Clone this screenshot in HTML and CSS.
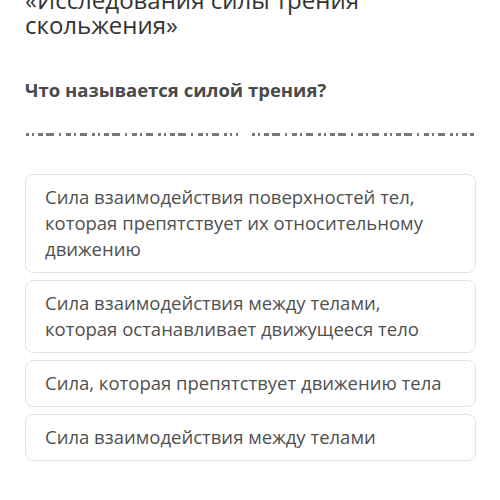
FILE: index.html
```html
<!DOCTYPE html>
<html lang="ru">
<head>
<meta charset="utf-8">
<link rel="stylesheet" href="styles.css">
</head>
<body>
<div class="page">
  <h1 class="title">«Исследования силы трения скольжения»</h1>
  <h2 class="question">Что называется силой трения?</h2>
  <div class="cutline"><span class="seg seg1"></span><span class="seg seg2"></span></div>
  <div class="options">
    <div class="option">Сила взаимодействия поверхностей тел, которая препятствует их относительному движению</div>
    <div class="option">Сила взаимодействия между телами, которая останавливает движущееся тело</div>
    <div class="option">Сила, которая препятствует движению тела</div>
    <div class="option">Сила взаимодействия между телами</div>
  </div>
</div>
</body>
</html>
```
FILE: styles.css
```css
html, body {
  margin: 0;
  padding: 0;
  background: #ffffff;
}
body {
  font-family: "Open Sans", "Noto Sans", sans-serif;
  overflow: hidden;
}
.page {
  padding: 0 24px 0 25px;
}
.title {
  margin: -13px 0 0 0;
  font-size: 24px;
  line-height: 25px;
  font-weight: 400;
  color: #333333;
  width: 360px;
}
.question {
  margin: 41px 0 0 0;
  font-size: 18.5px;
  line-height: 24px;
  font-weight: 700;
  color: #4a4a4a;
}
.cutline {
  margin-top: 31px;
  height: 3px;
  display: flex;
  gap: 14px;
  padding-left: 1px;
}
.seg {
  display: block;
  height: 3px;
  opacity: 0.8;
  background-image: repeating-linear-gradient(90deg,
    #555555 0 3px, transparent 3px 6px,
    #555555 6px 8px, transparent 8px 12px,
    #555555 12px 17px, transparent 17px 20px,
    #555555 20px 28px, transparent 28px 33px,
    #555555 33px 35px, transparent 35px 40px,
    #555555 40px 45px, transparent 45px 48px,
    #555555 48px 50px, transparent 50px 54px,
    #555555 54px 61px, transparent 61px 66px);
}
.seg1 { width: 212px; }
.seg2 { width: 222px; }
.options {
  margin-top: 38px;
  display: flex;
  flex-direction: column;
  gap: 7px;
}
.option {
  border: 1px solid #e4e4e4;
  border-radius: 8px;
  padding: 9px 19px 10px 19px;
  font-size: 18.5px;
  line-height: 26px;
  color: #505050;
}
```
